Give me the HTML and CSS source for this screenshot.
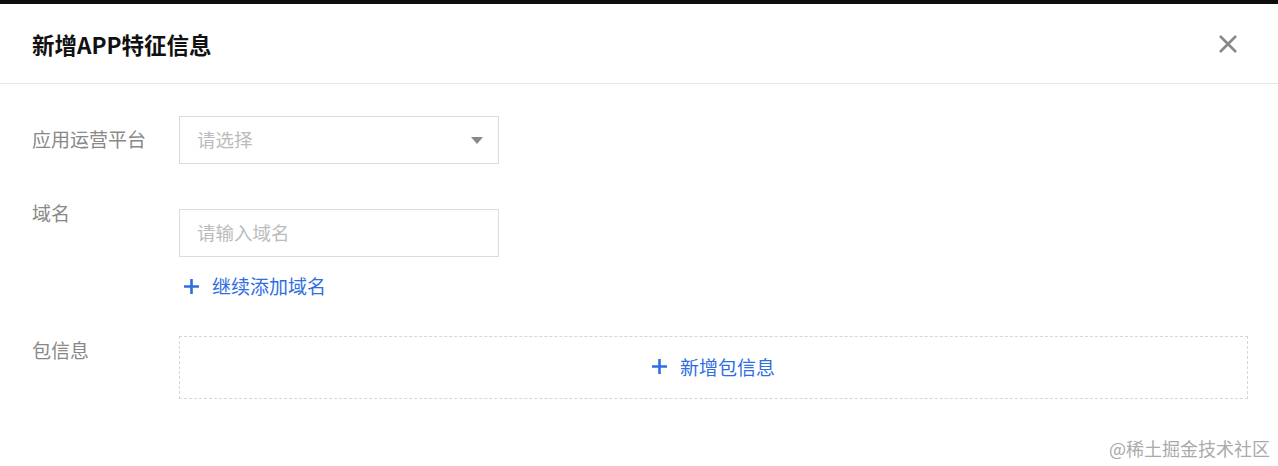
FILE: index.html
```html
<!DOCTYPE html>
<html lang="zh-CN">
<head>
<meta charset="utf-8">
<title>新增APP特征信息</title>
<link rel="stylesheet" href="styles.css">
</head>
<body>
<div class="topbar"></div>
<div class="dialog">
  <div class="header">
    <h1 class="title">新增APP特征信息</h1>
    <button class="close" aria-label="关闭">
      <svg width="20" height="20" viewBox="0 0 20 20"><path d="M2 2 L18 18 M18 2 L2 18" stroke="#888" stroke-width="2.6" fill="none"/></svg>
    </button>
  </div>
  <div class="form">
    <div class="row row-select">
      <div class="label label-mid">应用运营平台</div>
      <div class="control">
        <div class="select">
          <span class="placeholder">请选择</span>
          <svg class="caret" width="12" height="7" viewBox="0 0 12 7"><path d="M0 0 H12 L6 7 Z" fill="#888"/></svg>
        </div>
      </div>
    </div>
    <div class="row row-domain">
      <div class="label">域名</div>
      <div class="control control-offset">
        <div class="input"><span class="placeholder">请输入域名</span></div>
        <a class="link" href="#">
          <svg class="plus" width="15" height="15" viewBox="0 0 15 15"><path d="M7.5 0 V15 M0 7.5 H15" stroke="currentColor" stroke-width="2.6" fill="none"/></svg>
          <span>继续添加域名</span>
        </a>
      </div>
    </div>
    <div class="row row-pkg">
      <div class="label">包信息</div>
      <div class="control control-wide">
        <div class="dashed">
          <a class="link link-center" href="#">
            <svg class="plus" width="15" height="15" viewBox="0 0 15 15"><path d="M7.5 0 V15 M0 7.5 H15" stroke="currentColor" stroke-width="2.6" fill="none"/></svg>
            <span>新增包信息</span>
          </a>
        </div>
      </div>
    </div>
  </div>
  <div class="watermark">@稀土掘金技术社区</div>
</div>
</body>
</html>
```
FILE: styles.css
```css
html, body {
  margin: 0;
  padding: 0;
  background: #fff;
}
body {
  font-family: "Noto Sans CJK SC", "Noto Sans", sans-serif;
  width: 1278px;
  height: 466px;
  overflow: hidden;
}
.topbar {
  height: 4px;
  background: #0d0d0d;
}
.dialog {
  position: relative;
  height: 462px;
}
.header {
  height: 79px;
  border-bottom: 1px solid #e6e6e6;
  display: flex;
  align-items: center;
  justify-content: space-between;
  padding: 0 40px 0 32px;
}
.title {
  margin: 0;
  font-size: 22.5px;
  font-weight: 700;
  color: #111;
  line-height: 30px;
}
.close {
  border: 0;
  background: none;
  padding: 0;
  width: 20px;
  height: 20px;
  display: flex;
  align-items: center;
  justify-content: center;
  cursor: pointer;
}
.form {
  padding: 32px 30px 0 32px;
}
.row {
  display: flex;
  align-items: flex-start;
}
.label {
  width: 147px;
  flex: none;
  font-size: 19px;
  color: #888;
  line-height: 27px;
}
.label-mid {
  line-height: 46px;
}
.row-select {
  margin-bottom: 35px;
}
.row-domain {
  margin-bottom: 36px;
}
.control {
  display: flex;
  flex-direction: column;
  align-items: flex-start;
}
.control-offset {
  padding-top: 10px;
}
.control-wide {
  flex: 1;
  align-items: stretch;
}
.select, .input {
  box-sizing: border-box;
  width: 320px;
  height: 48px;
  border: 1px solid #dcdcdc;
  display: flex;
  align-items: center;
  justify-content: space-between;
  padding: 0 15px 2px 17px;
}
.placeholder {
  font-size: 18.5px;
  color: #bbb;
}
.caret {
  display: block;
  margin-top: 2px;
}
.link {
  display: flex;
  align-items: center;
  gap: 13px;
  color: #2f6ee0;
  text-decoration: none;
  font-size: 19px;
  line-height: 28px;
  margin-top: 15px;
  padding-left: 5px;
}
.plus {
  display: block;
}
.dashed {
  box-sizing: border-box;
  height: 63px;
  border: 1px dashed #d6d6d6;
  display: flex;
  align-items: center;
  justify-content: center;
  padding-bottom: 2px;
}
.link-center {
  margin-top: 0;
  padding-left: 0;
}
.watermark {
  position: absolute;
  right: 8px;
  bottom: 5px;
  font-size: 18px;
  color: #aaa;
  line-height: 26px;
}
```
